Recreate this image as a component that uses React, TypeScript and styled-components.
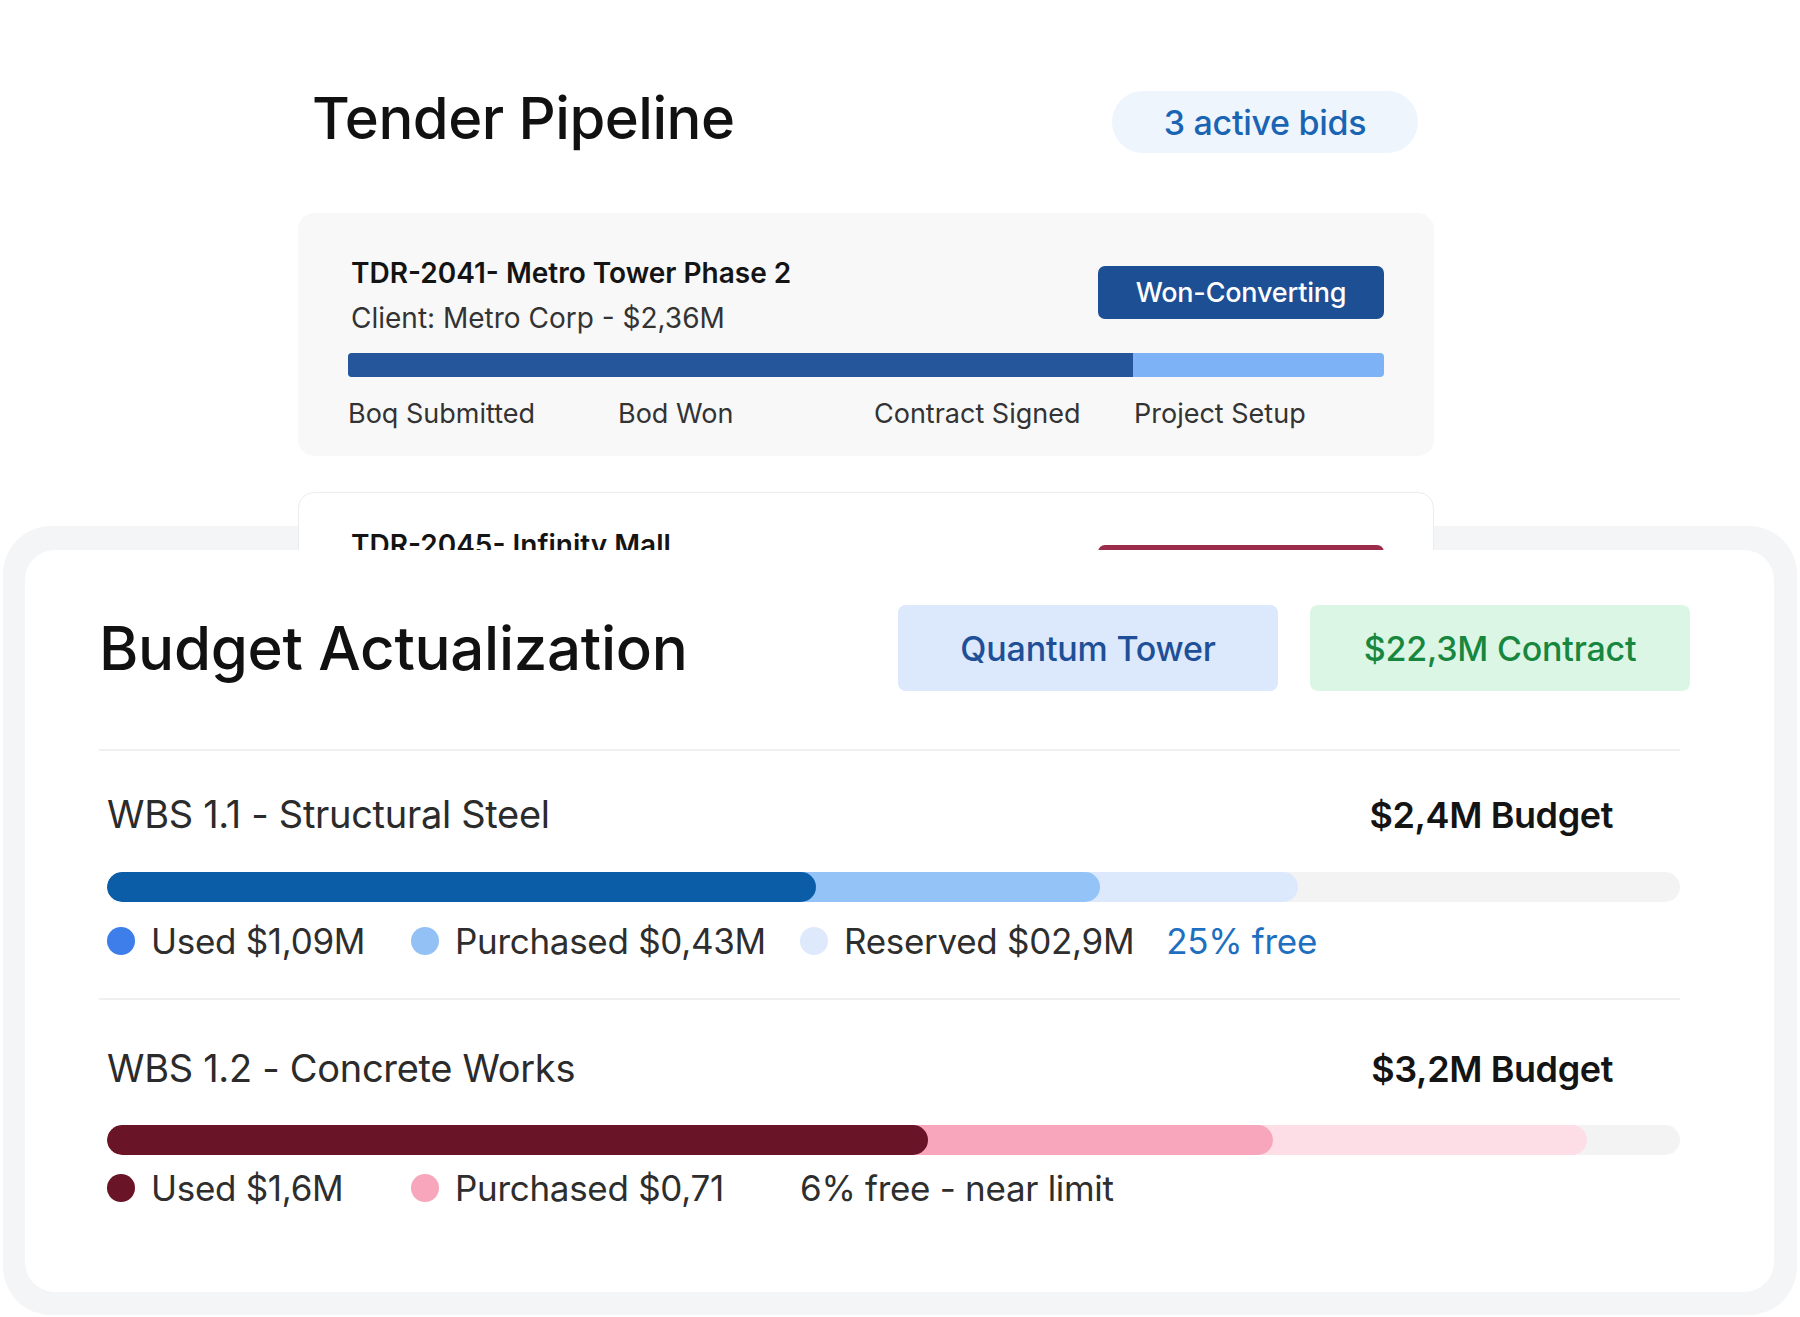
import React from 'react';
import styled, { createGlobalStyle } from 'styled-components';

export interface Segment {
  label?: string;
  percent: number;
  bar: string;
  dot: string;
}

export interface WbsRow {
  name: string;
  budget: string;
  segments: Segment[];
  free: string;
  freeColor: string;
  padTop: number;
  barGap: number;
  legendGap: number;
}

const GlobalStyle = createGlobalStyle`
  html, body {
    margin: 0;
    padding: 0;
    background: #FFFFFF;
  }
  body {
    font-family: Inter, "Noto Sans", sans-serif;
    color: #1A1A1A;
  }
  * {
    box-sizing: border-box;
  }
`;

const StyledPage = styled.div`
  position: relative;
  width: 1800px;
  height: 1317px;
  overflow: hidden;
  background: #FFFFFF;
`;

/* ---------- Tender pipeline ---------- */

const StyledTenderSection = styled.section`
  width: 1136px;
  margin-left: 298px;
  padding-top: 83px;
`;

const StyledTenderHeader = styled.div`
  display: flex;
  justify-content: space-between;
  align-items: flex-start;
  padding: 0 16px 0 14px;
  margin-bottom: 60px;
`;

const StyledPageTitle = styled.h1`
  margin: 0;
  font-size: 58px;
  line-height: 70px;
  font-weight: 500;
  letter-spacing: -0.5px;
  color: #111111;
`;

const StyledCountPill = styled.div`
  margin-top: 8px;
  width: 306px;
  height: 62px;
  display: flex;
  align-items: center;
  justify-content: center;
  border-radius: 31px;
  background: #EEF5FD;
  color: #1A64B4;
  font-size: 34px;
  font-weight: 500;
  letter-spacing: -0.3px;
`;

const StyledTenderCard = styled.div<{ $outlined?: boolean; $top: number }>`
  position: relative;
  z-index: 1;
  padding: ${p => p.$top}px 49px 25px 52px;
  margin-bottom: 36px;
  border-radius: 16px;
  background: ${p => (p.$outlined ? '#FFFFFF' : '#F8F8F8')};
  border: ${p => (p.$outlined ? '1.5px solid #ECECEC' : '1.5px solid #F8F8F8')};
`;

const StyledCardHeader = styled.div`
  display: flex;
  justify-content: space-between;
  align-items: flex-start;
`;

const StyledCardTitle = styled.div`
  font-size: 28px;
  line-height: 45px;
  font-weight: 600;
  color: #141414;
`;

const StyledCardClient = styled.div`
  font-size: 28px;
  line-height: 45px;
  font-weight: 400;
  color: #333333;
`;

const StyledStatusButton = styled.div<{ $color: string; $top: number }>`
  margin-top: ${p => p.$top}px;
  width: 286px;
  height: 53px;
  display: flex;
  align-items: center;
  justify-content: center;
  border-radius: 7px;
  background: ${p => p.$color};
  color: #FFFFFF;
  font-size: 27px;
  font-weight: 500;
  letter-spacing: -0.2px;
`;

const StyledStageTrack = styled.div`
  margin: 12px 0 0 -3px;
  height: 24px;
  border-radius: 4px;
  background: #7EB2F7;
  overflow: hidden;
`;

const StyledStageFill = styled.div`
  height: 100%;
  background: #25559B;
`;

const StyledStageRow = styled.div`
  display: grid;
  grid-template-columns: 270px 256px 260px 1fr;
  margin-top: 21px;
  margin-left: -3px;
  font-size: 27px;
  line-height: 32px;
  color: #333333;
`;

/* ---------- Budget actualization ---------- */

const StyledBudgetShell = styled.div`
  position: absolute;
  left: 3px;
  right: 3px;
  top: 526px;
  height: 789px;
  padding: 24px 23px 23px 22px;
  border-radius: 48px;
  background: #F4F5F7;
`;

const StyledBudgetPanel = styled.div`
  position: relative;
  z-index: 2;
  height: 100%;
  padding: 55px 94px 0 74px;
  border-radius: 30px;
  background: #FFFFFF;
`;

const StyledBudgetHeader = styled.div`
  display: flex;
  justify-content: space-between;
  align-items: center;
  margin-right: -10px;
`;

const StyledBudgetTitle = styled.h2`
  margin: 0;
  font-size: 60px;
  line-height: 72px;
  font-weight: 500;
  letter-spacing: -0.3px;
  color: #111111;
`;

const StyledChipGroup = styled.div`
  display: flex;
  gap: 32px;
`;

const StyledChip = styled.div<{ $bg: string; $fg: string }>`
  width: 380px;
  height: 86px;
  display: flex;
  align-items: center;
  justify-content: center;
  border-radius: 8px;
  background: ${p => p.$bg};
  color: ${p => p.$fg};
  font-size: 34px;
  font-weight: 500;
  letter-spacing: -0.2px;
`;

const StyledDivider = styled.div`
  height: 2px;
  background: #F0F0F0;
`;

const StyledHeaderDivider = styled(StyledDivider)`
  margin-top: 58px;
`;

const StyledWbsSection = styled.section<{ $top: number }>`
  padding: ${p => p.$top}px 0 35px 8px;
`;

const StyledWbsHead = styled.div`
  display: flex;
  justify-content: space-between;
  align-items: baseline;
  padding-right: 67px;
  line-height: 48px;
`;

const StyledWbsName = styled.div`
  font-size: 38px;
  font-weight: 400;
  letter-spacing: -0.3px;
  color: #2B2B2B;
`;

const StyledWbsBudget = styled.div`
  font-size: 36px;
  font-weight: 600;
  letter-spacing: -0.4px;
  color: #141414;
`;

const StyledBudgetTrack = styled.div<{ $gap: number }>`
  position: relative;
  margin-top: ${p => p.$gap}px;
  height: 30px;
  border-radius: 15px;
  background: #F3F3F3;
  overflow: hidden;
`;

const StyledBudgetFill = styled.div<{ $color: string }>`
  position: absolute;
  left: 0;
  top: 0;
  bottom: 0;
  border-radius: 15px;
  background: ${p => p.$color};
`;

const StyledLegend = styled.div<{ $gap: number }>`
  display: grid;
  grid-template-columns: 304px 389px auto auto;
  justify-content: start;
  align-items: center;
  margin-top: ${p => p.$gap}px;
  font-size: 35px;
  line-height: 44px;
  letter-spacing: -0.3px;
  color: #2E2E2E;
`;

const StyledLegendItem = styled.div`
  display: flex;
  align-items: center;
  gap: 16px;
`;

const StyledDot = styled.span<{ $color: string }>`
  width: 28px;
  height: 28px;
  border-radius: 50%;
  background: ${p => p.$color};
`;

const StyledFreeNote = styled.div<{ $color: string; $offset: number }>`
  margin-left: ${p => p.$offset}px;
  color: ${p => p.$color};
`;

const wbsRows: WbsRow[] = [
  {
    name: 'WBS 1.1 - Structural Steel',
    budget: '$2,4M Budget',
    segments: [
      { label: 'Used $1,09M', percent: 45.1, bar: '#0C5DA7', dot: '#3D7EEA' },
      { label: 'Purchased $0,43M', percent: 63.1, bar: '#94C3F7', dot: '#93C1F6' },
      { label: 'Reserved $02,9M', percent: 75.7, bar: '#DCE9FC', dot: '#DEE9FB' },
    ],
    free: '25% free',
    freeColor: '#1F6FC1',
    padTop: 39,
    barGap: 33,
    legendGap: 17,
  },
  {
    name: 'WBS 1.2 - Concrete Works',
    budget: '$3,2M Budget',
    segments: [
      { label: 'Used $1,6M', percent: 52.2, bar: '#6A1428', dot: '#6A1428' },
      { label: 'Purchased $0,71', percent: 74.1, bar: '#F7A6BC', dot: '#F7A6BC' },
      { percent: 94.1, bar: '#FDDDE6', dot: '#FDDDE6' },
    ],
    free: '6% free - near limit',
    freeColor: '#2E2E2E',
    padTop: 44,
    barGap: 32,
    legendGap: 11,
  },
];

const stages = ['Boq Submitted', 'Bod Won', 'Contract Signed', 'Project Setup'];

const App = () => {
  return (
    <StyledPage>
      <GlobalStyle />
      <StyledTenderSection>
        <StyledTenderHeader>
          <StyledPageTitle>Tender Pipeline</StyledPageTitle>
          <StyledCountPill>3 active bids</StyledCountPill>
        </StyledTenderHeader>

        <StyledTenderCard $top={37}>
          <StyledCardHeader>
            <div>
              <StyledCardTitle>TDR-2041- Metro Tower Phase 2</StyledCardTitle>
              <StyledCardClient>Client: Metro Corp - $2,36M</StyledCardClient>
            </div>
            <StyledStatusButton $color='#1D4F94' $top={15}>Won-Converting</StyledStatusButton>
          </StyledCardHeader>
          <StyledStageTrack>
            <StyledStageFill style={{ width: '75.8%' }} />
          </StyledStageTrack>
          <StyledStageRow>
            {stages.map(stage => (
              <span key={stage}>{stage}</span>
            ))}
          </StyledStageRow>
        </StyledTenderCard>

        <StyledTenderCard $outlined $top={30}>
          <StyledCardHeader>
            <div>
              <StyledCardTitle>TDR-2045- Infinity Mall</StyledCardTitle>
              <StyledCardClient>Client: Infinity Group - $1,12M</StyledCardClient>
            </div>
            <StyledStatusButton $color='#9B2C4A' $top={22}>At Risk</StyledStatusButton>
          </StyledCardHeader>
        </StyledTenderCard>
      </StyledTenderSection>

      <StyledBudgetShell>
        <StyledBudgetPanel>
          <StyledBudgetHeader>
            <StyledBudgetTitle>Budget Actualization</StyledBudgetTitle>
            <StyledChipGroup>
              <StyledChip $bg='#DCE8FB' $fg='#1E4F97'>Quantum Tower</StyledChip>
              <StyledChip $bg='#DCF6E5' $fg='#17873F'>$22,3M Contract</StyledChip>
            </StyledChipGroup>
          </StyledBudgetHeader>
          <StyledHeaderDivider />

          {wbsRows.map((row, index) => (
            <React.Fragment key={row.name}>
              {index > 0 && <StyledDivider />}
              <StyledWbsSection $top={row.padTop}>
                <StyledWbsHead>
                  <StyledWbsName>{row.name}</StyledWbsName>
                  <StyledWbsBudget>{row.budget}</StyledWbsBudget>
                </StyledWbsHead>
                <StyledBudgetTrack $gap={row.barGap}>
                  {[...row.segments].reverse().map(seg => (
                    <StyledBudgetFill key={seg.bar} $color={seg.bar} style={{ width: `${seg.percent}%` }} />
                  ))}
                </StyledBudgetTrack>
                <StyledLegend $gap={row.legendGap}>
                  {row.segments
                    .filter(seg => seg.label)
                    .map(seg => (
                      <StyledLegendItem key={seg.label}>
                        <StyledDot $color={seg.dot} />
                        {seg.label}
                      </StyledLegendItem>
                    ))}
                  <StyledFreeNote $color={row.freeColor} $offset={row.segments.every(s => s.label) ? 32 : 0}>
                    {row.free}
                  </StyledFreeNote>
                </StyledLegend>
              </StyledWbsSection>
            </React.Fragment>
          ))}
        </StyledBudgetPanel>
      </StyledBudgetShell>
    </StyledPage>
  );
};

export default App;
